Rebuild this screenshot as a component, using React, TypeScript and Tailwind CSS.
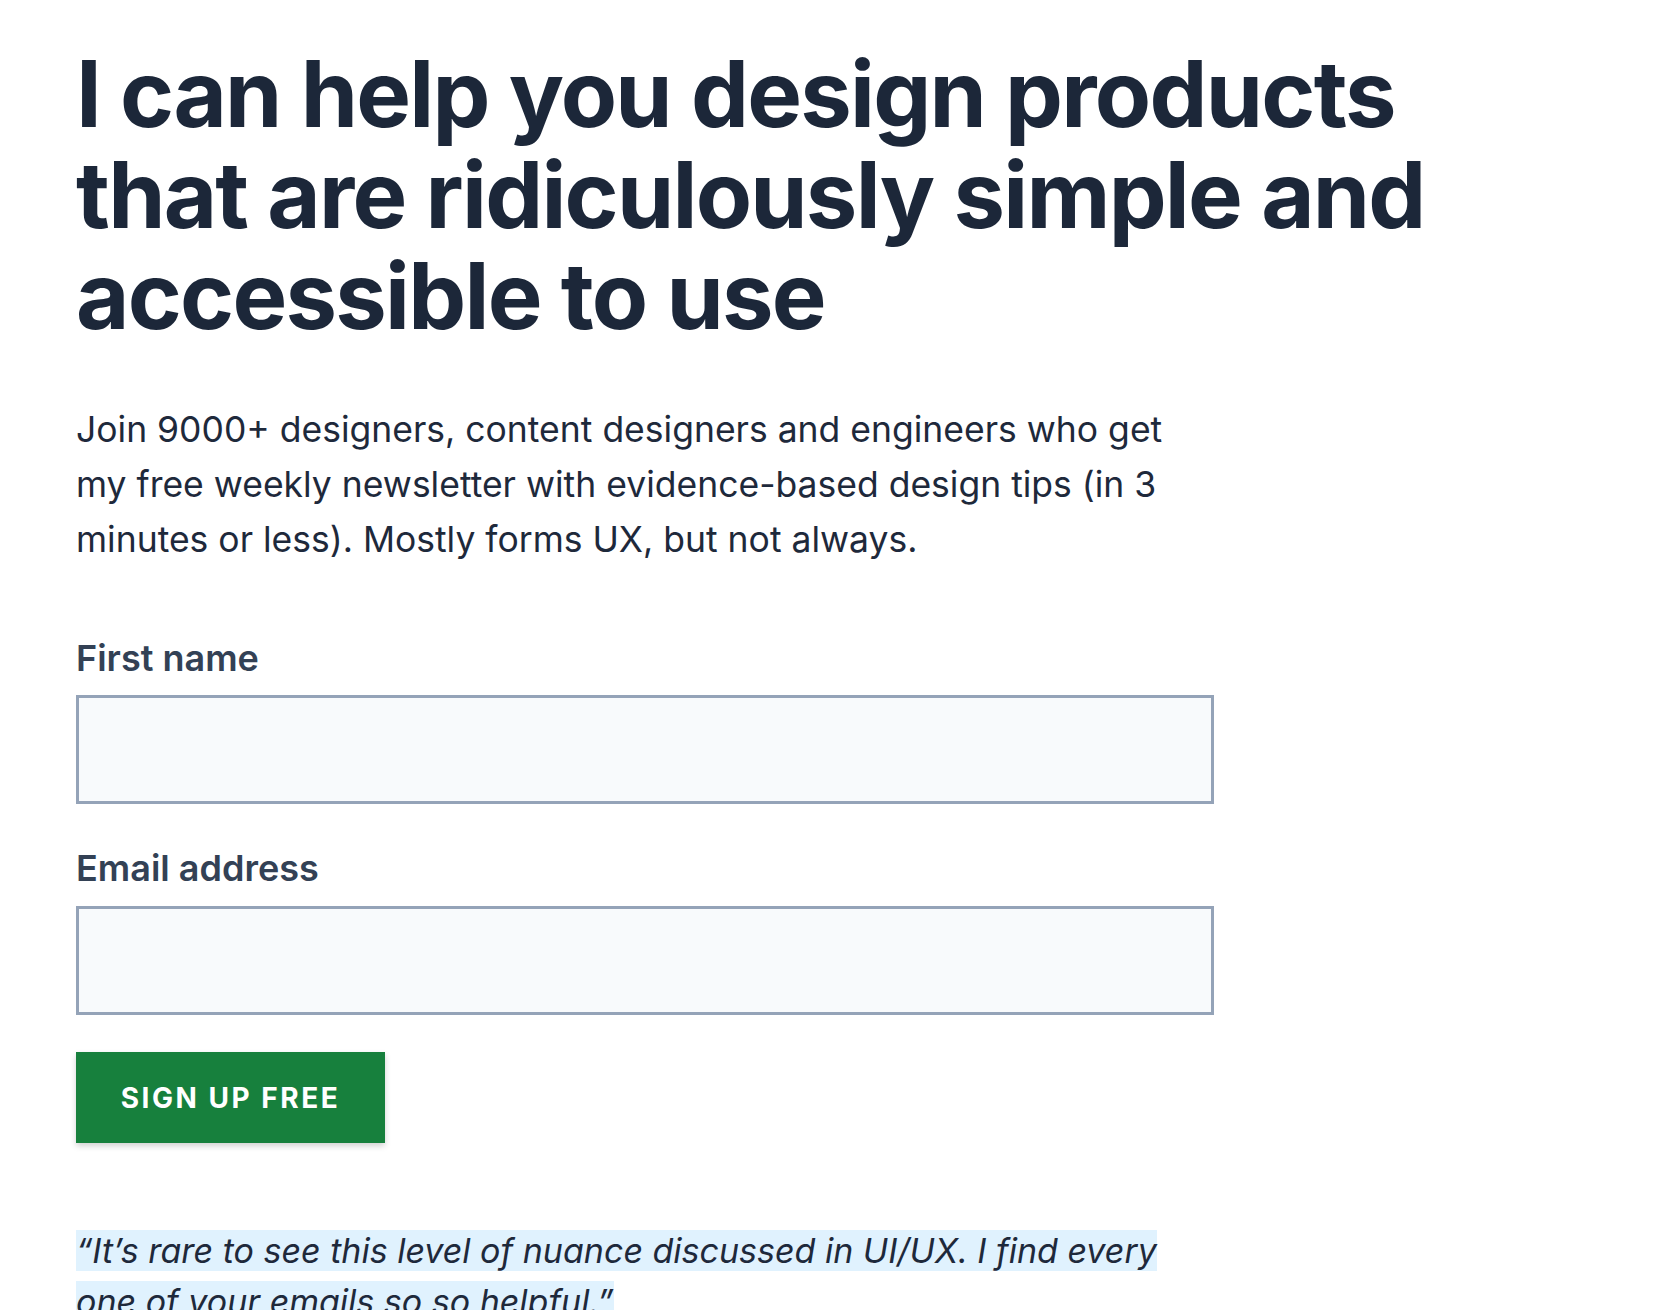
import React from "react";

export default function App() {
  return (
    <div
      className="min-h-screen w-full bg-white px-[76px] pt-[43px] text-[#1e293b]"
      style={{ fontFamily: "Inter, 'Noto Sans', 'Liberation Sans', sans-serif" }}
    >
      <h1 className="text-[92px] leading-[101px] font-bold tracking-[-0.019em] text-[#1c2739]">
        I can help you design products
        <br />
        that are ridiculously simple and
        <br />
        accessible to use
      </h1>

      <div className="w-[1138px]">
        <p className="mt-[56px] whitespace-nowrap text-[35.5px] leading-[55px] text-[#1e293b]">
          Join 9000+ designers, content designers and engineers who get
          <br />
          my free weekly newsletter with evidence-based design tips (in 3
          <br />
          minutes or less). Mostly forms UX, but not always.
        </p>

        <form className="flex flex-col">
          <label className="mt-[64px] block text-[36px] leading-[54px] font-semibold text-[#334155]">
            First name
          </label>
          <input
            type="text"
            className="mt-[10px] h-[109px] w-full border-[3px] border-[#94a3b8] bg-[#f8fafc] outline-none"
          />
          <label className="mt-[37px] block text-[36px] leading-[54px] font-semibold text-[#334155]">
            Email address
          </label>
          <input
            type="email"
            className="mt-[11px] h-[109px] w-full border-[3px] border-[#94a3b8] bg-[#f8fafc] outline-none"
          />
          <div className="mt-[37px]">
            <button
              type="button"
              className="h-[91px] w-[309px] bg-[#17803d] text-[28px] font-bold uppercase tracking-[0.09em] text-white shadow-[0_3px_6px_rgba(0,0,0,0.18)]"
            >
              Sign up free
            </button>
          </div>
        </form>

        <blockquote className="mt-[82px] text-[34px] leading-[51px] italic text-[#1e293b]">
          <span className="bg-[#e0f2fe]">
            “It’s rare to see this level of nuance discussed in UI/UX. I find every one of your
            emails so so helpful.”
          </span>
        </blockquote>
      </div>
    </div>
  );
}
